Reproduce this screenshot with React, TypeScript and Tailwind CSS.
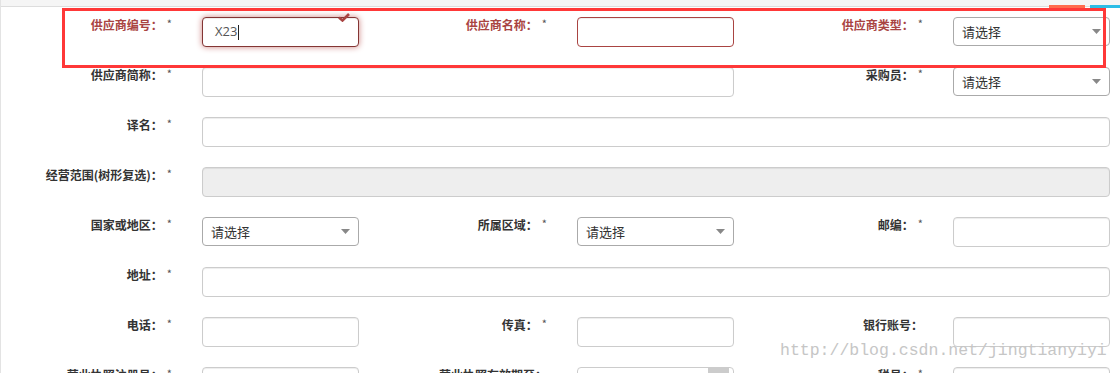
import React from "react";

const labelFont = { fontFamily: '"Noto Sans CJK SC", "Noto Sans", sans-serif' };

function Label({ text, required = true, error = false }: { text: string; required?: boolean; error?: boolean }) {
  return (
    <div
      className={`text-right pr-[30px] text-[12px] leading-[16px] font-bold whitespace-nowrap ${error ? "text-[#a94442]" : "text-[#333]"}`}
      style={labelFont}
    >
      {text}
      {required && <span className="ml-[4px] text-[11px] font-normal relative -top-[2px] text-[#555]">*</span>}
    </div>
  );
}

function TextBox({ error = false, disabled = false, span = "" }: { error?: boolean; disabled?: boolean; span?: string }) {
  return (
    <div
      className={`${span} h-[30px] rounded-[4px] border ${error ? "border-[#a94442]" : "border-[#ccc]"} ${disabled ? "bg-[#eee]" : "bg-white"} shadow-[inset_0_1px_1px_rgba(0,0,0,0.075)]`}
    />
  );
}

function Select({ span = "" }: { span?: string }) {
  return (
    <div
      className={`${span} h-[29px] rounded-[4px] border border-[#aaa] bg-white flex items-center justify-between pl-[8px] pr-[8px] text-[13px] text-[#333]`}
      style={labelFont}
    >
      <span>请选择</span>
      <svg width="9" height="5" viewBox="0 0 9 5">
        <path d="M0 0 L9 0 L4.5 5 Z" fill="#888" />
      </svg>
    </div>
  );
}

export default function App() {
  return (
    <div className="relative w-[1120px] h-[373px] overflow-hidden bg-white border-l border-[#e3e3e3]">
      <div className="relative h-[7px] bg-[#f5f5f5] border-b border-[#ddd]">
        <div className="absolute left-[1048px] top-[5px] w-[36px] h-[3px] bg-[#ff6b4e]" />
        <div className="absolute left-[1089px] top-[5px] w-[31px] h-[3px] bg-[#2cbde6]" />
      </div>

      <div className="mt-[10px] grid grid-cols-[201px_157px_218px_157px_219px_157px] gap-y-[20px] auto-rows-[30px]">
        <Label text="供应商编号：" error />
        <div className="relative h-[30px] rounded-[4px] border border-[#843534] bg-white shadow-[inset_0_1px_1px_rgba(0,0,0,0.075),0_0_6px_#ce8483] flex items-center pl-[12px] text-[13px] text-[#555]" style={{ fontFamily: '"Open Sans", "Liberation Sans", sans-serif' }}>
          X23
          <span className="ml-[1px] w-px h-[15px] bg-[#222]" />
          <svg className="absolute right-[8px] -top-[5px]" width="12" height="9" viewBox="0 0 12 9">
            <path d="M1 4.5 L4.5 7.5 L11 1" stroke="#a94442" strokeWidth="2.6" fill="none" />
          </svg>
        </div>
        <Label text="供应商名称：" error />
        <TextBox error />
        <Label text="供应商类型：" error />
        <Select />

        <Label text="供应商简称：" />
        <TextBox span="col-span-3" />
        <Label text="采购员：" />
        <Select />

        <Label text="译名：" />
        <TextBox span="col-span-5" />

        <Label text="经营范围(树形复选)：" />
        <TextBox span="col-span-5" disabled />

        <Label text="国家或地区：" />
        <Select />
        <Label text="所属区域：" />
        <Select />
        <Label text="邮编：" />
        <TextBox />

        <Label text="地址：" />
        <TextBox span="col-span-5" />

        <Label text="电话：" />
        <TextBox />
        <Label text="传真：" />
        <TextBox />
        <Label text="银行账号：" required={false} />
        <TextBox />

        <Label text="营业执照注册号：" />
        <TextBox />
        <Label text="营业执照有效期至：" required={false} />
        <div className="relative h-[30px] rounded-[4px] border border-[#ccc] bg-white">
          <div className="absolute right-[4px] top-0 w-[21px] h-[8px] bg-[#ccc]" />
        </div>
        <Label text="税号：" />
        <TextBox />
      </div>

      <div className="absolute left-[61px] top-[8px] w-[1044px] h-[60px] border-[3px] border-[#ff3838]" />

      <div
        className="absolute left-[779px] top-[341px] text-[16.5px] leading-[20px] text-[#c6c6c6] whitespace-nowrap"
        style={{ fontFamily: '"Liberation Mono", monospace' }}
      >
        http://blog.csdn.net/jingtianyiyi
      </div>
    </div>
  );
}
